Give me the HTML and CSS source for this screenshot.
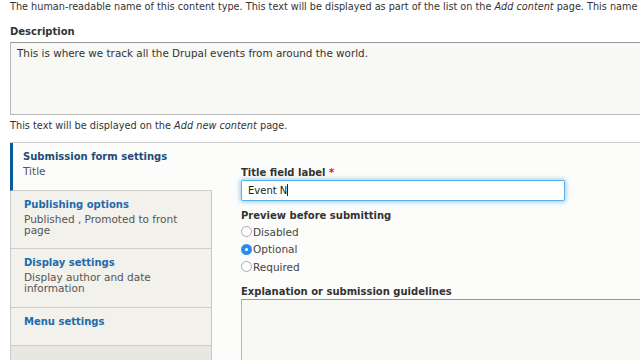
FILE: index.html
```html
<!DOCTYPE html>
<html>
<head>
<meta charset="utf-8">
<link rel="stylesheet" href="styles.css">
</head>
<body>
<div class="page">
  <div class="desc first">The human-readable name of this content type. This text will be displayed as part of the list on the <em>Add content</em> page. This name must be unique.</div>
  <div class="field">
    <div class="label">Description</div>
    <div class="textarea">This is where we track all the Drupal events from around the world.</div>
    <div class="desc">This text will be displayed on the <em>Add new content</em> page.</div>
  </div>
  <div class="vtabs">
    <ul class="menu">
      <li class="item active">
        <span class="title">Submission form settings</span>
        <span class="summary">Title</span>
      </li>
      <li class="item second">
        <span class="title">Publishing options</span>
        <span class="summary">Published , Promoted to front page</span>
      </li>
      <li class="item">
        <span class="title">Display settings</span>
        <span class="summary">Display author and date information</span>
      </li>
      <li class="item short">
        <span class="title">Menu settings</span>
      </li>
      <li class="filler"></li>
    </ul>
    <div class="pane">
      <div class="label">Title field label <span class="req">*</span></div>
      <div class="input">Event N<span class="caret"></span></div>
      <div class="label gap">Preview before submitting</div>
      <div class="radios">
        <div class="radio"><span class="dot"></span>Disabled</div>
        <div class="radio"><span class="dot on"></span>Optional</div>
        <div class="radio"><span class="dot"></span>Required</div>
      </div>
      <div class="label gap2">Explanation or submission guidelines</div>
      <div class="textarea big"></div>
    </div>
  </div>
</div>
</body>
</html>
```
FILE: styles.css
```css
html, body {
  margin: 0;
  padding: 0;
  background: #fff;
  overflow: hidden;
}
body {
  font-family: "DejaVu Sans", "Lucida Grande", sans-serif;
  color: #333;
  font-size: 10px;
}
.page {
  width: 700px;
  padding-left: 10px;
}
.desc {
  font-size: 9.75px;
  line-height: 14px;
  color: #333;
  white-space: nowrap;
}
.desc.first {
  font-size: 9.7px;
}
.field {
  margin-top: 11px;
}
.label {
  font-weight: bold;
  font-size: 10px;
  line-height: 14px;
  color: #333;
}
.textarea {
  margin-top: 3px;
  border: 1px solid #b8b8b8;
  border-top-color: #999;
  background: #f8f8f5;
  box-sizing: content-box;
  padding: 3px 0 0 6px;
  font-size: 10.4px;
  line-height: 14px;
  color: #333;
}
.field .textarea {
  height: 68px;
}
.field .desc {
  margin-top: 4px;
}
.vtabs {
  margin-top: 9px;
  display: flex;
  border-top: 1px solid #ccc;
  border-left: 1px solid #ccc;
  background: #fcfcfa;
  height: 260px;
}
.menu {
  list-style: none;
  margin: 0;
  padding: 0;
  width: 200px;
  display: flex;
  flex-direction: column;
  background: #f2f1eb;
  border-right: 1px solid #c8c8c8;
}
.item {
  padding: 7px 10px 8px 13px;
  border-bottom: 1px solid #ccc;
  display: flex;
  flex-direction: column;
  height: 43px;
}
.item.second {
  height: 42px;
}
.item.active {
  background: #fcfcfa;
  border-left: 3px solid #0a5c99;
  padding-left: 10px;
  margin-left: -1px;
  margin-right: -1px;
  height: 32px;
}
.item.short {
  height: 22px;
}
.title {
  font-weight: bold;
  color: #1f6aaa;
  font-size: 10px;
  line-height: 14px;
}
.item.active .title {
  color: #1d4c7a;
}
.summary {
  font-size: 10.5px;
  line-height: 11px;
  color: #555;
  margin-top: 2px;
}
.filler {
  flex: 1;
  background: #e8e7e2;
}
.pane {
  flex: 1;
  padding: 23px 0 0 29px;
}
.req {
  color: #d11;
}
.input {
  margin-top: 0;
  width: 316px;
  height: 19px;
  border: 1px solid #5ab0e8;
  box-shadow: 0 0 4px 1px rgba(64, 170, 235, 0.55);
  background: #fff;
  border-radius: 2px;
  padding-left: 6px;
  font-size: 10px;
  line-height: 19px;
  color: #222;
}
.caret {
  display: inline-block;
  width: 1px;
  height: 12px;
  background: #222;
  vertical-align: -2px;
}
.label.gap {
  margin-top: 8px;
}
.radios {
  display: flex;
  flex-direction: column;
}
.radio {
  display: flex;
  align-items: center;
  height: 17.5px;
  font-size: 10.5px;
  color: #444;
}
.dot {
  width: 11px;
  height: 11px;
  border: 1px solid #aaa;
  border-radius: 50%;
  background: #fff;
  margin-right: 1px;
  box-sizing: border-box;
  flex: none;
}
.dot.on {
  border: 4px solid #2d8de6;
  background: #fff;
}
.label.gap2 {
  margin-top: 9px;
}
.textarea.big {
  margin-top: 0;
  height: 80px;
}
```
